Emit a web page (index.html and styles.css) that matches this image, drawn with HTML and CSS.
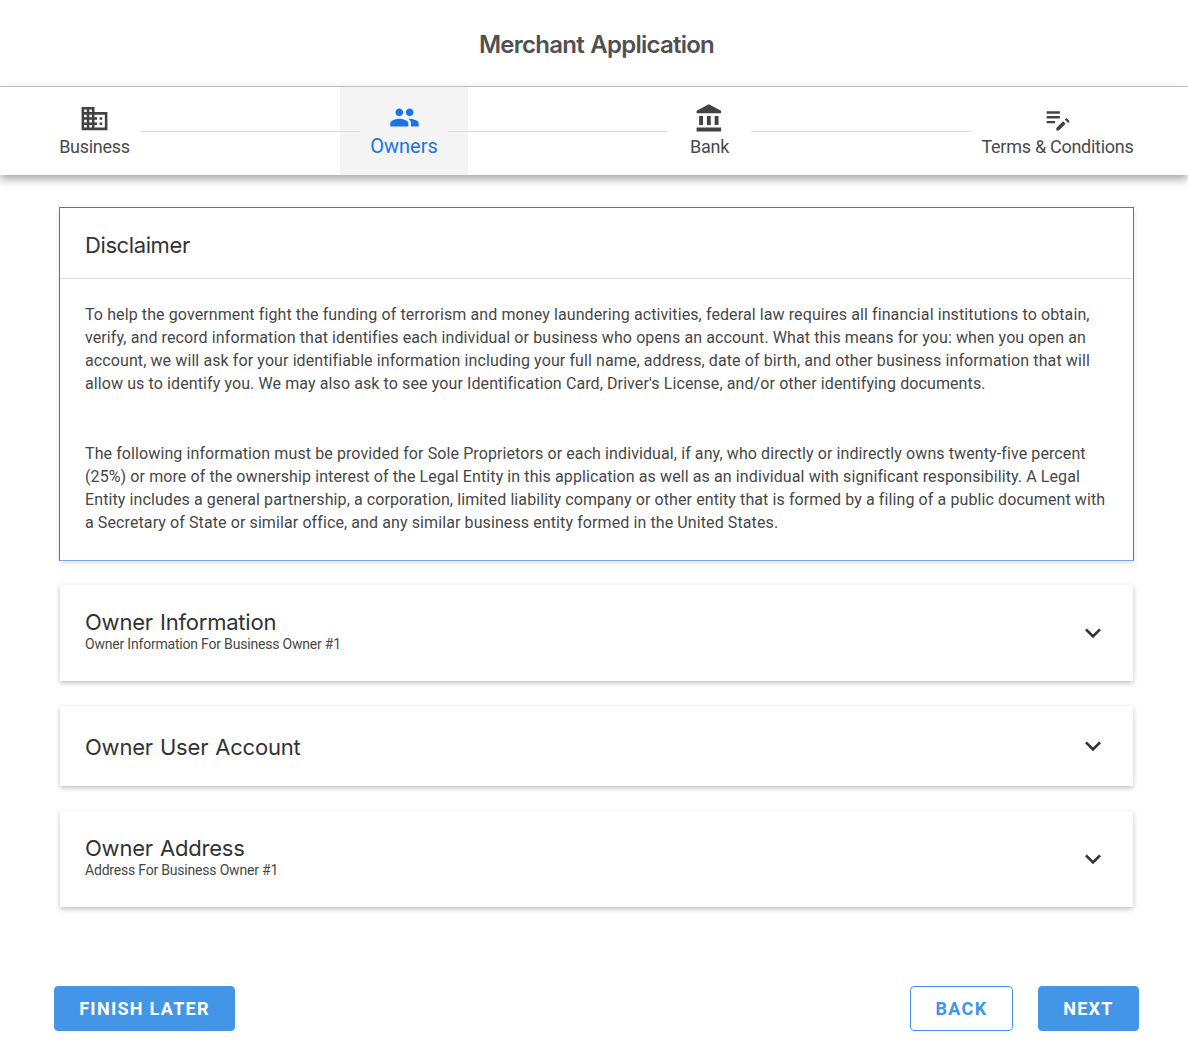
FILE: index.html
```html
<!DOCTYPE html>
<html lang="en">
<head>
<meta charset="utf-8">
<title>Merchant Application</title>
<link rel="stylesheet" href="styles.css">
</head>
<body>
<header class="title-bar"><h1>Merchant Application</h1></header>
<nav class="stepper">
  <div class="step step-business">
    <svg class="icon" viewBox="0 0 24 24"><path d="M12 7V3H2v18h20V7H12zM6 19H4v-2h2v2zm0-4H4v-2h2v2zm0-4H4V9h2v2zm0-4H4V5h2v2zm4 12H8v-2h2v2zm0-4H8v-2h2v2zm0-4H8V9h2v2zm0-4H8V5h2v2zm10 12h-8v-2h2v-2h-2v-2h2v-2h-2V9h8v10zm-2-8h-2v2h2v-2zm0 4h-2v2h2v-2z"/></svg>
    <span>Business</span>
  </div>
  <div class="line line-a"></div>
  <div class="step step-owners active">
    <svg class="icon" viewBox="0 0 24 24"><path d="M16 11c1.660 0 2.990-1.340 2.990-3S17.660 5 16 5c-1.660 0-3 1.340-3 3s1.340 3 3 3zm-8 0c1.660 0 2.990-1.340 2.990-3S9.660 5 8 5C6.340 5 5 6.340 5 8s1.340 3 3 3zm0 2c-2.330 0-7 1.170-7 3.500V19h14v-2.500c0-2.330-4.670-3.500-7-3.500zm8 0c-.290 0-.620.020-.970.050 1.160.840 1.970 1.970 1.970 3.450V19h6v-2.500c0-2.330-4.670-3.500-7-3.500z"/></svg>
    <span>Owners</span>
  </div>
  <div class="line line-b"></div>
  <div class="step step-bank">
    <svg class="icon" viewBox="0 0 24 24"><path d="M4 10v7h3v-7H4zm6 0v7h3v-7h-3zM2 22h19v-3H2v3zm14-12v7h3v-7h-3zm-4.500-9L2 6v2h19V6l-9.500-5z"/></svg>
    <span>Bank</span>
  </div>
  <div class="line line-c"></div>
  <div class="step step-terms">
    <svg class="icon" viewBox="0 0 24 24"><path d="M3 10h11v2H3v-2zM3 8h11V6H3v2zM3 16h7v-2H3v2zM18.010 12.870l.710-.710c.390-.390 1.020-.390 1.410 0l1.410 1.410c.390.390.390 1.020 0 1.410l-.710.710-2.820-2.820zM16.600 14.280 11 19.880V22h2.120l5.600-5.600-2.120-2.120z"/></svg>
    <span>Terms &amp; Conditions</span>
  </div>
</nav>
<main class="content">
  <section class="disclaimer">
    <h2>Disclaimer</h2>
    <div class="disclaimer-body">
      <p>To help the government fight the funding of terrorism and money laundering activities, federal law requires all financial institutions to obtain, verify, and record information that identifies each individual or business who opens an account. What this means for you: when you open an account, we will ask for your identifiable information including your full name, address, date of birth, and other business information that will allow us to identify you. We may also ask to see your Identification Card, Driver's License, and/or other identifying documents.</p>
      <p>The following information must be provided for Sole Proprietors or each individual, if any, who directly or indirectly owns twenty-five percent (25%) or more of the ownership interest of the Legal Entity in this application as well as an individual with significant responsibility. A Legal Entity includes a general partnership, a corporation, limited liability company or other entity that is formed by a filing of a public document with a Secretary of State or similar office, and any similar business entity formed in the United States.</p>
    </div>
  </section>
  <section class="panel">
    <div class="panel-text"><h3>Owner Information</h3><small>Owner Information For Business Owner #1</small></div>
    <svg class="chevron" viewBox="0 0 24 24"><path d="M7.410 8.590 12 13.170l4.590-4.580L18 10l-6 6-6-6z"/></svg>
  </section>
  <section class="panel panel-plain">
    <div class="panel-text"><h3>Owner User Account</h3></div>
    <svg class="chevron" viewBox="0 0 24 24"><path d="M7.410 8.590 12 13.170l4.590-4.580L18 10l-6 6-6-6z"/></svg>
  </section>
  <section class="panel">
    <div class="panel-text"><h3>Owner Address</h3><small>Address For Business Owner #1</small></div>
    <svg class="chevron" viewBox="0 0 24 24"><path d="M7.410 8.590 12 13.170l4.590-4.580L18 10l-6 6-6-6z"/></svg>
  </section>
</main>
<footer class="actions">
  <button class="btn btn-later">FINISH LATER</button>
  <div class="actions-right">
    <button class="btn btn-outline">BACK</button>
    <button class="btn btn-next">NEXT</button>
  </div>
</footer>
</body>
</html>
```
FILE: styles.css
```css
* { box-sizing: border-box; }
html, body { margin: 0; padding: 0; background: #fff; }
body { width: 1188px; height: 1056px; overflow: hidden; font-family: Roboto, "Liberation Sans", sans-serif; color: #3f3f3f; }
h1, h2, h3, p { margin: 0; }
.title-bar { height: 87px; border-bottom: 1px solid #c9c9c9; display: flex; align-items: center; justify-content: center; padding: 3px 0 0 5px; }
.title-bar h1 { font: 600 24px/30px Inter, sans-serif; color: #505050; letter-spacing: -0.75px; word-spacing: 1px; }
.stepper { height: 88px; display: flex; position: relative; z-index: 1; box-shadow: 0 4px 9px rgba(0,0,0,.36); padding-left: 59px; background: #fff; }
.step { display: flex; flex-direction: column; align-items: center; font-size: 18px; line-height: 22px; letter-spacing: -0.27px; color: #4a4a4a; flex: none; padding-top: 16px; }
.icon { width: 31px; height: 31px; fill: #424242; display: block; margin-bottom: 2px; }
.step-business { width: 71px; }
.step-owners { width: 128px; background: #f4f4f4; color: #1a73e8; font-size: 20px; line-height: 20px; letter-spacing: 0; padding-top: 15px; }
.step-owners .icon { fill: #1a73e8; margin-bottom: 3px; }
.step-bank { width: 83px; }
.step-terms { width: 153px; white-space: nowrap; }
.step-terms .icon { width: 29px; height: 29px; margin: 1px 0 3px; }
.line { height: 1px; background: #dedede; margin-top: 44px; flex: none; }
.line-a { width: 220px; margin-left: 10px; margin-right: -20px; position: relative; }
.line-b { width: 220px; margin-left: -20px; position: relative; }
.line-c { width: 220px; margin-right: 10px; }
.content { padding: 32px 54px 0 59px; }
.disclaimer { height: 354px; border: 1px solid #3d7bd0; border-bottom-color: #7ba6e3; box-shadow: 0 2px 5px rgba(0,0,0,.12); }
.disclaimer h2 { height: 71px; padding-left: 25px; border-bottom: 1px solid #e0e0e0; font: 400 22px/74px Inter, sans-serif; color: #333; letter-spacing: -0.4px; }
.disclaimer-body { padding: 24px 25px 0; font-size: 16px; line-height: 23px; color: #474747; letter-spacing: 0.1px; }
.disclaimer-body p + p { margin-top: 47px; }
.panel { margin: 24px 1px 25px; height: 96px; display: flex; align-items: center; justify-content: space-between; padding: 0 24px 0 25px; box-shadow: 0 2px 5px rgba(0,0,0,.25); }
.panel + .panel { margin-top: 0; }
.panel-plain { height: 80px; }
.panel-text { margin-bottom: 4px; }
.panel-plain .panel-text { margin-bottom: 0; padding-top: 2px; }
.panel h3 { font: 400 22px/26px Inter, sans-serif; color: #333; letter-spacing: -0.2px; word-spacing: 1px; }
.panel small { display: block; font-size: 14px; line-height: 18px; color: #474747; letter-spacing: -0.2px; }
.chevron { width: 32px; height: 32px; fill: #333; flex: none; }
.actions { margin-top: 79px; padding: 0 49px 0 54px; display: flex; justify-content: space-between; }
.actions-right { display: flex; gap: 25px; }
.btn { height: 45px; border-radius: 4px; border: 1px solid #4395e8; background: #4395e8; color: #fff; font: 700 18px/1 Roboto, sans-serif; letter-spacing: 1.3px; padding: 0; }
.btn-later { width: 181px; }
.btn-outline { width: 103px; background: #fff; color: #4395e8; }
.btn-next { width: 101px; }
```
